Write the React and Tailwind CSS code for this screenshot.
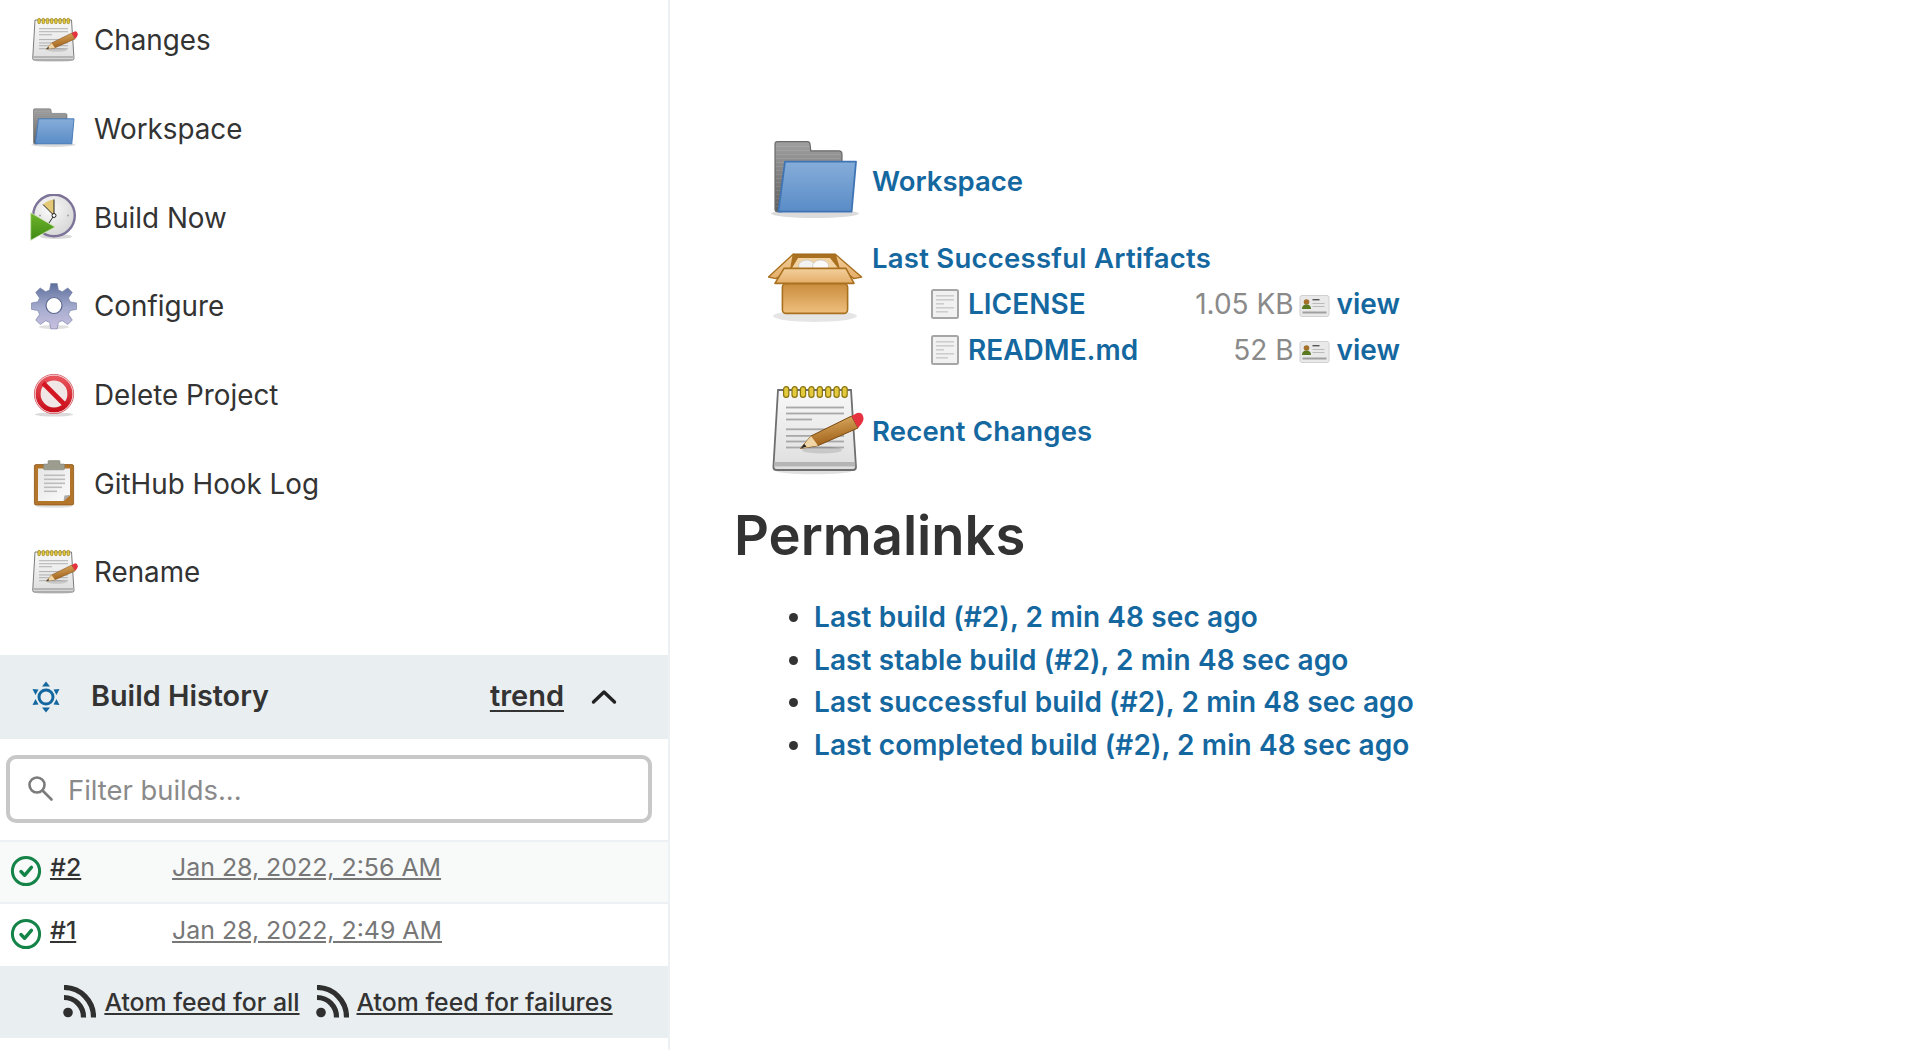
import React from 'react';

const font = { fontFamily: 'Inter, "Noto Sans", sans-serif' };

function NotepadIcon({ size = 48, id = 'n' }) {
  const rings = [9, 13.2, 17.4, 21.6, 25.8, 30, 34.2, 38.2];
  return (
    <svg width={size} height={size} viewBox="0 0 48 48" className="shrink-0">
      <defs>
        <linearGradient id={id + 'paper'} x1="0" y1="0" x2="0" y2="1">
          <stop offset="0" stopColor="#f8f8f8" />
          <stop offset="1" stopColor="#dedede" />
        </linearGradient>
        <linearGradient id={id + 'pencil'} x1="0" y1="0" x2="0.3" y2="1">
          <stop offset="0" stopColor="#e8b96f" />
          <stop offset="1" stopColor="#9c5c15" />
        </linearGradient>
      </defs>
      <ellipse cx="23" cy="44.5" rx="19" ry="1.6" fill="#000" opacity="0.12" />
      <path d="M5 4h36.5l2.5 38.5q0 1.5-1.5 1.5H4.2q-1.5 0-1.5-1.5z" fill={`url(#${id}paper)`} stroke="#6e6e6e" strokeWidth="0.9" />
      <rect x="3.2" y="40" width="40.4" height="2.2" fill="#b5b5b5" />
      {[12.3, 15.3, 18.3, 23.2, 26.5, 29.3, 32.3].map((y, i) => (
        <rect key={y} x="9" y={y} width={i === 2 ? 13 : 29} height="0.9" fill="#a8a8a8" />
      ))}
      {rings.map((x) => (
        <rect key={x} x={x - 1.2} y="2.3" width="2.6" height="5.4" rx="1.3" fill="#e3c93c" stroke="#8a7412" strokeWidth="0.6" />
      ))}
      <ellipse cx="27" cy="34" rx="10" ry="1.8" fill="#000" opacity="0.12" />
      <path d="M16.3 33.2l5.2-6.2 20.3-10 3.2 6-20 8.8z" fill={`url(#${id}pencil)`} stroke="#7a4a10" strokeWidth="0.5" strokeLinejoin="round" />
      <path d="M16.3 33.2l5.2-6.2 3.5 4.8z" fill="#f0d6a6" />
      <path d="M16.3 33.2l1.8-2.2 1.2 1.3z" fill="#222" />
      <path d="M41.8 17l2.7-1.5q2.2-.6 3 1.5t-.8 4l-1.7 2z" fill="#e6323e" />
    </svg>
  );
}

function FolderIcon({ size = 48, id = 'f' }) {
  const stripes = [6, 8, 10, 12, 14, 16, 18, 20, 22, 24, 26, 28, 30, 32, 34, 36];
  return (
    <svg width={size} height={size} viewBox="0 0 48 48" className="shrink-0">
      <defs>
        <linearGradient id={id + 'back'} x1="0" y1="0" x2="0" y2="1">
          <stop offset="0" stopColor="#a0a0a0" />
          <stop offset="1" stopColor="#5f5f5f" />
        </linearGradient>
        <linearGradient id={id + 'front'} x1="0" y1="0" x2="0" y2="1">
          <stop offset="0" stopColor="#86add9" />
          <stop offset="1" stopColor="#5a8cc7" />
        </linearGradient>
      </defs>
      <ellipse cx="23.5" cy="39.8" rx="22" ry="2.2" fill="#000" opacity="0.14" />
      <path d="M3.5 5q0-1.2 1.2-1.2h15q1.2 0 1.3 1.2l.4 3.4h14q1.6 0 1.6 1.6v6L7 38.8H4.5q-1 0-1-1z" fill={`url(#${id}back)`} stroke="#6b6b6b" strokeWidth="0.6" />
      {stripes.map((y) => (
        <rect key={y} x="4" y={y} width={y < 9 ? 17 : 32} height="0.5" fill="#fff" opacity="0.1" />
      ))}
      <path d="M8.5 13.8h35.5l-2.2 25H5.2z" fill={`url(#${id}front)`} stroke="#3f74b4" strokeWidth="0.9" strokeLinejoin="round" />
    </svg>
  );
}

function ClockIcon({ size = 48 }) {
  return (
    <svg width={size} height={size} viewBox="0 0 48 48" className="shrink-0">
      <defs>
        <radialGradient id="clockFace" cx="0.4" cy="0.35" r="0.8">
          <stop offset="0" stopColor="#fafafa" />
          <stop offset="1" stopColor="#cfcfcf" />
        </radialGradient>
        <linearGradient id="playFill" x1="0" y1="0" x2="0" y2="1">
          <stop offset="0" stopColor="#6fb52c" />
          <stop offset="1" stopColor="#3f8a12" />
        </linearGradient>
      </defs>
      <ellipse cx="26" cy="42.5" rx="16" ry="2.5" fill="#000" opacity="0.15" />
      <circle cx="24" cy="21.5" r="20.8" fill="url(#clockFace)" stroke="#7d7398" strokeWidth="2.4" />
      <path d="M24 21.5L13 10.5Q18 6 24 5.5z" fill="#e3c877" />
      <circle cx="10" cy="21.5" r="1.1" fill="#aaa" />
      <circle cx="38" cy="21.5" r="1.1" fill="#aaa" />
      <path d="M24 5.5v16M13 10.5l11 11M24 21.5L17 32" stroke="#111" strokeWidth="0.9" fill="none" />
      <circle cx="24" cy="21.5" r="2" fill="#fff" stroke="#111" strokeWidth="0.9" />
      <path d="M.7 18.7L25 33 .7 46.3z" fill="url(#playFill)" stroke="#cfe3b5" strokeWidth="0.8" />
    </svg>
  );
}

function GearIcon({ size = 48 }) {
  return (
    <svg width={size} height={size} viewBox="0 0 48 48" className="shrink-0">
      <defs>
        <linearGradient id="gearGrad" x1="0" y1="2" x2="0" y2="46" gradientUnits="userSpaceOnUse">
          <stop offset="0" stopColor="#5f6f9d" />
          <stop offset="0.55" stopColor="#a5acce" />
          <stop offset="1" stopColor="#c8bfdf" />
        </linearGradient>
      </defs>
      <ellipse cx="24" cy="45" rx="15" ry="2" fill="#000" opacity="0.12" />
      <path d="M20.8 1.5h6.4l1.2 6.6 3.9 1.6 5.5-3.8 4.5 4.5-3.8 5.5 1.6 3.9 6.4 1.2v6.4l-6.4 1.2-1.6 3.9 3.8 5.5-4.5 4.5-5.5-3.8-3.9 1.6-1.2 6.6h-6.4l-1.2-6.6-3.9-1.6-5.5 3.8-4.5-4.5 3.8-5.5-1.6-3.9-6.4-1.2v-6.4l6.4-1.2 1.6-3.9-3.8-5.5 4.5-4.5 5.5 3.8 3.9-1.6z" fill="url(#gearGrad)" stroke="#6f7aa3" strokeWidth="0.6" />
      <circle cx="24" cy="23.5" r="8" fill="#fff" stroke="#5d6890" strokeWidth="1.2" />
    </svg>
  );
}

function NoEntryIcon({ size = 48 }) {
  return (
    <svg width={size} height={size} viewBox="0 0 48 48" className="shrink-0">
      <defs>
        <linearGradient id="ringRed" x1="0" y1="0" x2="0" y2="1">
          <stop offset="0" stopColor="#e8525a" />
          <stop offset="1" stopColor="#c80f1c" />
        </linearGradient>
      </defs>
      <ellipse cx="24" cy="43.5" rx="19" ry="2" fill="#000" opacity="0.14" />
      <circle cx="24" cy="23" r="19.6" fill="#f0e6e6" stroke="#c81a26" strokeWidth="0.8" />
      <circle cx="24" cy="23" r="16" fill="none" stroke="url(#ringRed)" strokeWidth="5.2" />
      <path d="M13 12l22 22" stroke="#d31722" strokeWidth="4.6" />
      <circle cx="24" cy="23" r="19" fill="none" stroke="#f5c5c8" strokeWidth="0.9" />
    </svg>
  );
}

function ClipboardIcon({ size = 48 }) {
  return (
    <svg width={size} height={size} viewBox="0 0 48 48" className="shrink-0">
      <defs>
        <linearGradient id="sheet" x1="0" y1="0" x2="1" y2="1">
          <stop offset="0" stopColor="#e6e6e6" />
          <stop offset="1" stopColor="#fbfbfb" />
        </linearGradient>
      </defs>
      <ellipse cx="24" cy="46.5" rx="18" ry="1.3" fill="#000" opacity="0.12" />
      <rect x="4.4" y="4.6" width="39.2" height="40.4" rx="1.6" fill="#b3752a" stroke="#8a5518" strokeWidth="0.8" />
      <path d="M8 8.5h32v26.5L33.5 41H8z" fill="url(#sheet)" />
      <path d="M33.5 41l1-5.5 5.5-.5z" fill="#a9a9a9" />
      {[14.5, 18.5, 22.5, 26.5, 30.5].map((y, i) => (
        <rect key={y} x="14" y={y} width={i > 2 ? (i === 4 ? 13 : 18) : 21} height="1.6" fill="#bcbcbc" />
      ))}
      <path d="M19 .6h10q1 0 1 1V4h3.5q1.2 0 1.2 1.2v3q0 1.6-1.6 1.6H15q-1.6 0-1.6-1.6v-3Q13.4 4 14.6 4H18V1.6q0-1 1-1z" fill="#9d9d8f" stroke="#7b7b6e" strokeWidth="0.5" />
    </svg>
  );
}

function BoxIcon({ size = 96 }) {
  return (
    <svg width={size} height={size} viewBox="0 0 48 48" className="shrink-0">
      <defs>
        <linearGradient id="boxBody" x1="0" y1="0" x2="0" y2="1">
          <stop offset="0" stopColor="#c98c3c" />
          <stop offset="1" stopColor="#efbf7e" />
        </linearGradient>
        <linearGradient id="boxLid" x1="0" y1="0" x2="0" y2="1">
          <stop offset="0" stopColor="#f3cf9b" />
          <stop offset="1" stopColor="#e4ae6a" />
        </linearGradient>
      </defs>
      <ellipse cx="23.5" cy="39" rx="21" ry="3" fill="#000" opacity="0.1" />
      <path d="M12.7 8h20.6l3 7.5H9.5z" fill="#a9701f" stroke="#9c6519" strokeWidth="0.5" />
      <path d="M12 15l3-5h16l4 5z" fill="#f2d2a0" />
      <ellipse cx="19.3" cy="14" rx="4" ry="3" fill="#f2f2f2" stroke="#bdbdbd" strokeWidth="0.3" />
      <ellipse cx="26.3" cy="14" rx="4" ry="3" fill="#fafafa" stroke="#bdbdbd" strokeWidth="0.3" />
      <path d="M12.7 8L.2 19.5 4 20.3l7.5-5.2z" fill="url(#boxLid)" stroke="#a9701f" strokeWidth="0.7" strokeLinejoin="round" />
      <path d="M33.5 8l13.3 11.5-3.8.8-7.5-5.2z" fill="url(#boxLid)" stroke="#a9701f" strokeWidth="0.7" strokeLinejoin="round" />
      <rect x="7.2" y="22.7" width="32.6" height="15" rx="1.8" fill="url(#boxBody)" stroke="#a9701f" strokeWidth="0.8" />
      <path d="M8 15.2h31l4 7.5H3.5z" fill="url(#boxLid)" stroke="#a9701f" strokeWidth="0.8" strokeLinejoin="round" />
    </svg>
  );
}

function FileIcon() {
  return (
    <svg width="28" height="30" viewBox="0 0 28 30" className="shrink-0">
      <rect x="1" y="1" width="26" height="28" rx="1.5" fill="#f1f1f1" stroke="#a6a6a6" strokeWidth="2" />
      {[6, 10, 14, 18, 22].map((y, i) => (
        <rect key={y} x="5" y={y} width={i === 2 ? 8 : i === 4 ? 12 : 18} height="1.6" fill="#cdcdcd" />
      ))}
    </svg>
  );
}

function CardIcon() {
  return (
    <svg width="31" height="22" viewBox="0 0 30 22" className="mt-[3px] shrink-0">
      <rect x="0.5" y="0.5" width="29" height="21" rx="2" fill="#e9e9e9" stroke="#d0d0d0" />
      <circle cx="7" cy="7" r="2.8" fill="#a5702a" />
      <path d="M2.5 14q0-4.5 4.5-4.5t4.5 4.5z" fill="#5a7a1f" />
      <rect x="13" y="4" width="7" height="1.4" fill="#555" />
      <rect x="13" y="8" width="12" height="1" fill="#bbb" />
      <rect x="13" y="11" width="12" height="1" fill="#bbb" />
      <rect x="3" y="16.5" width="24" height="2" fill="#a0a0a0" />
    </svg>
  );
}

function HistoryIcon() {
  return (
    <svg width="30" height="32" viewBox="0 0 30 32" className="shrink-0" fill="#14689f">
      <circle cx="15" cy="16" r="7" fill="none" stroke="#14689f" strokeWidth="3" />
      <path d="M15 .5l4 5h-8zM15 31.5l-4-5h8zM1.5 8l6 .5-3 5.5zM28.5 8l-6 .5 3 5.5zM1.5 24l6-.5-3-5.5zM28.5 24l-6-.5 3-5.5z" />
    </svg>
  );
}

function StatusIcon() {
  return (
    <svg width="32" height="32" viewBox="0 0 32 32" className="mb-[2px] shrink-0" fill="none" stroke="#138347">
      <circle cx="16" cy="16" r="13.6" strokeWidth="3" />
      <path d="M11 16.5l3.6 3.8 6.8-8" strokeWidth="3.4" strokeLinecap="round" strokeLinejoin="round" />
    </svg>
  );
}

function RssIcon() {
  return (
    <svg width="33" height="33" viewBox="0 0 33 33" className="shrink-0" fill="none" stroke="#2f2f2f">
      <circle cx="5" cy="27.5" r="4.8" fill="#2f2f2f" stroke="none" />
      <path d="M1 12.5a19.5 19.5 0 0 1 19.5 20" strokeWidth="5.2" />
      <path d="M1 2.5a29.5 29.5 0 0 1 29.5 30" strokeWidth="5.2" />
    </svg>
  );
}

const tasks = [
  { label: 'Changes', icon: <NotepadIcon id="n1" /> },
  { label: 'Workspace', icon: <FolderIcon id="f1" /> },
  { label: 'Build Now', icon: <ClockIcon /> },
  { label: 'Configure', icon: <GearIcon /> },
  { label: 'Delete Project', icon: <NoEntryIcon /> },
  { label: 'GitHub Hook Log', icon: <ClipboardIcon /> },
  { label: 'Rename', icon: <NotepadIcon id="n2" /> },
];

const builds = [
  { num: '#2', date: 'Jan 28, 2022, 2:56 AM', row: 'bg-[#f8f9f9] border-y-2 border-[#eef1f3] h-[64px]' },
  { num: '#1', date: 'Jan 28, 2022, 2:49 AM', row: 'bg-white h-[62px]' },
];

const permalinks = [
  'Last build (#2), 2 min 48 sec ago',
  'Last stable build (#2), 2 min 48 sec ago',
  'Last successful build (#2), 2 min 48 sec ago',
  'Last completed build (#2), 2 min 48 sec ago',
];

const artifacts = [
  { name: 'LICENSE', size: '1.05 KB' },
  { name: 'README.md', size: '52 B' },
];

export default function App() {
  return (
    <div className="flex h-[1050px] overflow-hidden bg-white text-[#333]" style={font}>
      {/* Side panel */}
      <aside className="w-[670px] shrink-0 border-r-2 border-[#eef1f3]">
        <ul className="-mt-[4px] mb-[38px]">
          {tasks.map((t) => (
            <li key={t.label} className="flex h-[88.67px] items-center pl-[30px] text-[27.8px] text-[#333]">
              {t.icon}
              <span className="ml-[16px] pt-[2px]">{t.label}</span>
            </li>
          ))}
        </ul>

        <div className="flex h-[84px] items-center bg-[#e9eef1] pl-[31px] pr-[50px]">
          <HistoryIcon />
          <span className="mb-[2px] ml-[30px] text-[28.8px] font-semibold">Build History</span>
          <a className="mb-[2px] ml-auto text-[29px] font-semibold underline underline-offset-4">trend</a>
          <svg width="28" height="28" viewBox="0 0 28 28" className="ml-[26px]" fill="none" stroke="#222" strokeWidth="3.4">
            <path d="M3.5 19L14 9l10.5 10" strokeLinecap="round" strokeLinejoin="round" />
          </svg>
        </div>

        <div className="h-[101px] pl-[6px] pr-[16px] pt-[16px]">
          <div className="flex h-[68px] items-center rounded-[10px] border-4 border-[#c8c8c8] pl-[16px]">
            <svg width="28" height="28" viewBox="0 0 28 28" className="mb-[2px]" fill="none" stroke="#7b7b7b" strokeWidth="2.6">
              <circle cx="11" cy="11" r="7.5" />
              <path d="M16.5 16.5l9 9" strokeLinecap="round" />
            </svg>
            <span className="ml-[14px] pt-[3px] text-[27.4px] text-[#8a8a8a]">Filter builds...</span>
          </div>
        </div>

        {builds.map((b) => (
          <div key={b.num} className={'flex items-center pl-[10px] text-[24.9px] ' + b.row}>
            <StatusIcon />
            <a className="mb-[7px] ml-[8px] w-[122px] font-medium underline underline-offset-2">{b.num}</a>
            <a className="mb-[7px] text-[#777] underline underline-offset-2">{b.date}</a>
          </div>
        ))}

        <div className="flex h-[72px] items-center justify-center bg-[#e9eef1] pl-[8px] text-[24.8px] font-medium">
          <RssIcon />
          <a className="ml-[8px] pt-[1px] underline underline-offset-2">Atom feed for all</a>
          <span className="ml-[16px]"><RssIcon /></span>
          <a className="ml-[8px] pt-[1px] underline underline-offset-2">Atom feed for failures</a>
        </div>
      </aside>

      {/* Main panel */}
      <main className="flex-1 pl-[64px] pt-[134px] text-[#14689f] font-semibold text-[27.5px]">
        <div className="ml-[34px] flex h-[96px] items-center">
          <FolderIcon size={96} id="f2" />
          <a className="ml-[8px]">Workspace</a>
        </div>

        <div className="ml-[34px] mt-[8px] flex h-[136px]">
          <BoxIcon />
          <div className="ml-[8px]">
            <a className="mb-[5px] block pt-[2px] leading-[36px] tracking-[0.25px]">Last Successful Artifacts</a>
            {artifacts.map((a) => (
              <div key={a.name} className="ml-[59px] flex h-[46px] w-[469px] items-center text-[28px]">
                <FileIcon />
                <a className="ml-[9px] font-semibold">{a.name}</a>
                <span className="ml-auto font-normal text-[#8a8a8a]">{a.size}</span>
                <span className="ml-[5px]"><CardIcon /></span>
                <a className="ml-[7px] font-semibold">view</a>
              </div>
            ))}
          </div>
        </div>

        <div className="ml-[34px] mt-[8px] flex h-[96px] items-center">
          <NotepadIcon size={96} id="n3" />
          <a className="ml-[8px] pt-[3px] tracking-[0.18px]">Recent Changes</a>
        </div>

        <h1 className="mt-[19px] text-[54.3px] font-semibold leading-[76px] text-[#333]">Permalinks</h1>

        <ul className="mt-[23px] list-disc pl-[80px] text-[28px] tracking-[0.1px] marker:text-[#333]">
          {permalinks.map((p) => (
            <li key={p} className="h-[42.7px] leading-[42.7px]">
              <a>{p}</a>
            </li>
          ))}
        </ul>
      </main>
    </div>
  );
}
